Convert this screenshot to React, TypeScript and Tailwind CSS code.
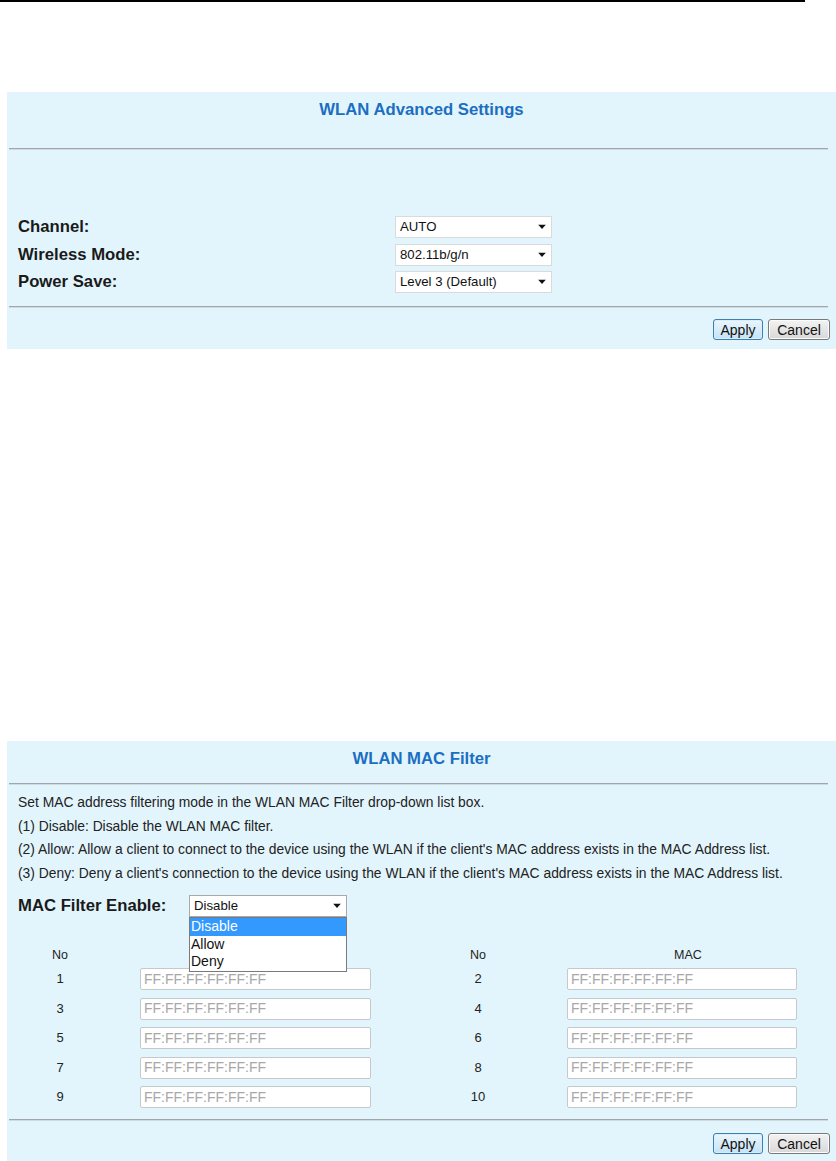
import React from "react";

const Arrow = () => (
  <svg width="8" height="5" viewBox="0 0 8 5" className="absolute right-[5px] top-1/2 -translate-y-1/2">
    <path d="M0 0 L8 0 L4 4.5 Z" fill="#111" />
  </svg>
);

const Select = ({ value, w }: { value: string; w: string }) => (
  <div className={`relative h-[22px] ${w} bg-white border border-[#dadada] flex items-center pl-[4px] text-[13.2px] text-[#111]`}>
    {value}
    <Arrow />
  </div>
);

const Sep = () => (
  <div className="ml-[2px] mr-[8px]">
    <div className="h-px bg-[#a2a6aa]" />
    <div className="h-px bg-[#cfdbe1]" />
  </div>
);

const Buttons = () => (
  <div className="flex justify-end gap-[5px] pr-[6px]">
    <button className="w-[50px] h-[21px] rounded-[3px] border border-[#3c7fb1] bg-gradient-to-b from-[#eaf6fd] to-[#c5e2f4] text-[14px] leading-none text-[#111] shadow-[inset_0_0_0_1px_#d9eefb]">
      Apply
    </button>
    <button className="w-[62px] h-[21px] rounded-[3px] border border-[#7a7a7a] bg-gradient-to-b from-[#f3f3f3] to-[#d8d8d8] text-[14px] leading-none text-[#111] shadow-[inset_0_0_0_1px_#fbfbfb]">
      Cancel
    </button>
  </div>
);

const MacInput = ({ w }: { w: string }) => (
  <div className={`h-[22px] ${w} bg-white border border-[#c6c9cb] rounded-[2px] flex items-center pl-[3px] text-[14px] text-[#a8a8a8]`}>
    FF:FF:FF:FF:FF:FF
  </div>
);

export default function App() {
  const rows = [
    [1, 2],
    [3, 4],
    [5, 6],
    [7, 8],
    [9, 10],
  ];
  return (
    <div className="w-[836px] h-[1161px] bg-white overflow-hidden flex flex-col font-['Liberation_Sans',Arial,sans-serif]">
      <div className="w-[805px] h-[2px] bg-black shrink-0" />
      <div className="h-[90px] shrink-0" />

      {/* Panel 1 */}
      <div className="ml-[7px] w-[829px] h-[257px] shrink-0 bg-[#e3f5fc] flex flex-col">
        <div className="pt-[8px] text-center text-[16.7px] leading-[20px] font-bold text-[#1b6ec2]">
          WLAN Advanced Settings
        </div>
        <div className="mt-[28px]">
          <Sep />
        </div>
        <div className="mt-[66px] pl-[11px] flex flex-col gap-[5.5px]">
          {[
            ["Channel:", "AUTO"],
            ["Wireless Mode:", "802.11b/g/n"],
            ["Power Save:", "Level 3 (Default)"],
          ].map(([l, v]) => (
            <div key={l} className="flex items-center h-[22px]">
              <div className="w-[377px] text-[16.7px] font-bold text-[#1a1a1a]">{l}</div>
              <Select value={v} w="w-[157px]" />
            </div>
          ))}
        </div>
        <div className="mt-[13px]">
          <Sep />
        </div>
        <div className="mt-[11px]">
          <Buttons />
        </div>
      </div>

      <div className="h-[392px] shrink-0" />

      {/* Panel 2 */}
      <div className="ml-[7px] w-[829px] flex-1 bg-[#e3f5fc] flex flex-col">
        <div className="pt-[8px] text-center text-[16.7px] leading-[20px] font-bold text-[#1b6ec2]">
          WLAN MAC Filter
        </div>
        <div className="mt-[14px]">
          <Sep />
        </div>
        <div className="mt-[6px] pl-[11px] text-[13.85px] leading-[23.5px] text-[#222]">
          <div>Set MAC address filtering mode in the WLAN MAC Filter drop-down list box.</div>
          <div>(1) Disable: Disable the WLAN MAC filter.</div>
          <div>(2) Allow: Allow a client to connect to the device using the WLAN if the client's MAC address exists in the MAC Address list.</div>
          <div>(3) Deny: Deny a client's connection to the device using the WLAN if the client's MAC address exists in the MAC Address list.</div>
        </div>
        <div className="mt-[10px] pl-[11px] flex items-center h-[22px]">
          <div className="w-[171px] text-[16.7px] font-bold text-[#1a1a1a]">MAC Filter Enable:</div>
          <div className="relative z-10">
            <div className="relative h-[22px] w-[158px] bg-white border border-[#a9a9a9] flex items-center pl-[4px] text-[13.2px] text-[#111]">
              Disable
              <Arrow />
            </div>
            <div className="absolute left-0 top-full w-[158px] bg-white border border-[#7a7a7a] text-[14px] leading-[17.5px] text-[#111]">
              <div className="bg-[#3399ff] text-white pl-[1px]">Disable</div>
              <div className="pl-[1px]">Allow</div>
              <div className="pl-[1px]">Deny</div>
            </div>
          </div>
        </div>

        <div className="mt-[28px] pl-[23px] flex items-center h-[20px] text-[12.5px] text-[#222]">
          <div className="w-[60px] text-center">No</div>
          <div className="ml-[50px] w-[231px] text-center">MAC</div>
          <div className="ml-[77px] w-[60px] text-center">No</div>
          <div className="ml-[59px] w-[230px] text-center pl-[12px]">MAC</div>
        </div>
        <div className="mt-[3px] flex flex-col gap-[7.5px]">
          {rows.map(([a, b]) => (
            <div key={a} className="pl-[23px] flex items-center h-[22px] text-[13px] text-[#222]">
              <div className="w-[60px] text-center">{a}</div>
              <div className="ml-[50px]">
                <MacInput w="w-[231px]" />
              </div>
              <div className="ml-[77px] w-[60px] text-center">{b}</div>
              <div className="ml-[59px]">
                <MacInput w="w-[230px]" />
              </div>
            </div>
          ))}
        </div>
        <div className="mt-[11px]">
          <Sep />
        </div>
        <div className="mt-[12px]">
          <Buttons />
        </div>
      </div>
    </div>
  );
}
